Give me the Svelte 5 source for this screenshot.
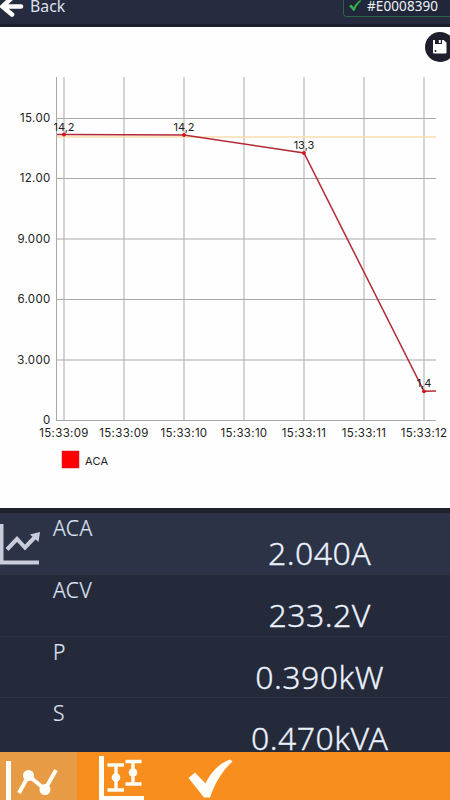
<script>
    const serial = "#E0008390";

    const yTicks = [
        { y: 118.5, label: "15.00" },
        { y: 178.5, label: "12.00" },
        { y: 239, label: "9.000" },
        { y: 299.5, label: "6.000" },
        { y: 360, label: "3.000" },
        { y: 420.5, label: "0" },
    ];
    const xTicks = [
        { x: 64, label: "15:33:09" },
        { x: 124, label: "15:33:09" },
        { x: 184, label: "15:33:10" },
        { x: 244, label: "15:33:10" },
        { x: 304, label: "15:33:11" },
        { x: 364, label: "15:33:11" },
        { x: 424, label: "15:33:12" },
    ];
    const points = [
        { x: 64, y: 134.5, label: "14,2" },
        { x: 184, y: 135, label: "14,2" },
        { x: 304, y: 153, label: "13,3" },
        { x: 424, y: 391.3, label: "1,4" },
    ];
    const line =
        "57,134.5 " + points.map((p) => `${p.x},${p.y}`).join(" ") + " 436,391";

    let rows = [
        { name: "ACA", value: "2.040A" },
        { name: "ACV", value: "233.2V" },
        { name: "P", value: "0.390kW" },
        { name: "S", value: "0.470kVA" },
    ];
    let selected = $state("ACA");
    let tab = $state("line");
</script>

<div class="app">
    <header>
        <button class="back">
            <svg width="24" height="24" viewBox="0 0 24 24">
                <path d="M3 6.5H21M11 -1.5L2.5 6.5L12 14.5" />
            </svg>
            <span>Back</span>
        </button>
        <div class="serial">
            <svg width="13" height="12" viewBox="0 0 13 12">
                <path d="M0 6.4L2.2 4.4L4.7 7.2C6.5 4.3 8.6 1.8 11.2 0L12.2 .8C9.2 3.7 7 7 5.4 11H4.3C3.2 9.1 1.8 7.6 0 6.4Z" />
            </svg>
            <span>{serial}</span>
        </div>
    </header>

    <section class="chart">
        <svg width="450" height="480" viewBox="0 28 450 480">
            <g class="grid">
                {#each yTicks as t}
                    <line x1="56" x2="436" y1={t.y} y2={t.y} />
                {/each}
                {#each xTicks as t}
                    <line x1={t.x} x2={t.x} y1="77" y2="420" />
                {/each}
                <line x1="56.5" x2="56.5" y1="77" y2="421" />
            </g>
            <line class="limit" x1="57" x2="436" y1="137" y2="137" />
            <g class="axis">
                {#each yTicks as t}
                    <text x="50.5" y={t.y + 3.5} text-anchor="end">{t.label}</text>
                {/each}
                {#each xTicks as t}
                    <text x={t.x} y="437" text-anchor="middle">{t.label}</text>
                {/each}
            </g>
            <polyline class="series" points={line} />
            {#each points as p}
                <circle class="dot" cx={p.x} cy={p.y} r="1.9" />
                <text class="point" x={p.x} y={p.y - 4} text-anchor="middle">{p.label}</text>
            {/each}
            <rect class="key" x="62" y="451" width="17" height="17" />
            <text class="legend" x="85" y="464.5">ACA</text>
        </svg>
        <button class="save" aria-label="Save">
            <svg width="30" height="30" viewBox="0 0 30 30">
                <path d="M8.5 8H10V12H17V8H18.5L21.5 10.5V20.5Q21.5 21.5 20.5 21.5H9Q8 21.5 8 20.5V8.5ZM13.8 8H15.8V11H13.8Z" />
                <circle cx="10.5" cy="19" r="1" />
            </svg>
        </button>
    </section>

    <section class="values">
        {#each rows as row}
            <div class="row" class:selected={selected === row.name}>
                <div class="mark">
                    {#if selected === row.name}
                        <svg width="42" height="42" viewBox="0 0 42 42">
                            <path class="axes" d="M1.5 1V39.5H39" />
                            <path class="trend" d="M7 26.5L17 16L25 24.5L36 13" />
                            <path class="head" d="M30 11.5L40 9L38.5 19Z" />
                        </svg>
                    {/if}
                </div>
                <span class="name">{row.name}</span>
                <span class="value">{row.value}</span>
            </div>
        {/each}
    </section>

    <nav>
        <button class:active={tab === "line"} aria-label="Line chart" onclick={() => (tab = "line")}>
            <svg width="77" height="48" viewBox="0 0 77 48">
                <path class="thick" d="M8.5 9V48" />
                <path d="M19 41L28.5 23.5L45 37.5L56 18" />
                <circle cx="28.5" cy="23.5" r="5.5" />
                <circle cx="45" cy="37.5" r="5.5" />
            </svg>
        </button>
        <button class:active={tab === "range"} aria-label="Range chart" onclick={() => (tab = "range")}>
            <svg width="77" height="48" viewBox="0 0 77 48">
                <path class="thick" d="M24.5 4V46.5H67" />
                <path d="M30.5 13H47M39 13V38M30.5 38H47M48.5 9.5H64.5M56 9.5V32M48.5 32H64.5" class="thin" />
                <circle cx="39" cy="25.5" r="4.3" />
                <circle cx="56" cy="20.5" r="4.3" />
            </svg>
        </button>
        <button class:active={tab === "check"} aria-label="Confirm" onclick={() => (tab = "check")}>
            <svg width="96" height="48" viewBox="0 0 96 48">
                <path class="tick" d="M34.5 26L41 20.5L51.5 31.5C57 20 65 11.5 76 7.5L78.5 9.5C68.5 18.5 61 31 56 45.5H50Z" />
            </svg>
        </button>
    </nav>
</div>

<style>
    :global(body) {
        margin: 0;
    }
    .app {
        display: flex;
        flex-direction: column;
        width: 450px;
        height: 800px;
        overflow: hidden;
        background: #252a3b;
        font-family: "Noto Sans", sans-serif;
    }
    button {
        border: 0;
        padding: 0;
        background: none;
        font: inherit;
        color: inherit;
    }
    svg {
        display: block;
    }
    header {
        display: flex;
        justify-content: space-between;
        align-items: flex-start;
        height: 27px;
        box-sizing: border-box;
        flex: none;
        background: #262b3f;
        border-bottom: 3px solid #1b1e2b;
        color: #eef0f6;
    }
    .back {
        display: flex;
        gap: 6px;
        height: 24px;
    }
    .back span {
        font-size: 15.8px;
        line-height: 13px;
        color: #dde1ed;
    }
    .back path {
        fill: none;
        stroke: #fff;
        stroke-width: 4.6;
        stroke-linecap: round;
    }
    .serial {
        display: flex;
        gap: 5px;
        width: 107px;
        height: 17px;
        box-sizing: border-box;
        padding-left: 5px;
        border: solid #2a6348;
        border-width: 0 0 1px 1px;
        border-radius: 0 0 0 4px;
        background: #20273a;
        font-size: 13.5px;
        line-height: 13px;
    }
    .serial span {
        letter-spacing: 0.1px;
    }
    .serial path {
        fill: #35b04b;
    }
    .chart {
        position: relative;
        height: 480px;
        flex: none;
        padding-top: 1px;
        background: #fefefe;
        border-bottom: 5px solid #1e202a;
    }
    .grid line {
        stroke: #a9a9ab;
        stroke-width: 1;
    }
    .limit {
        stroke: #fbdcaf;
        stroke-width: 1.3;
    }
    .axis,
    .point,
    .legend {
        font-family: Inter, sans-serif;
        fill: #222;
    }
    .axis {
        font-size: 11.5px;
        letter-spacing: 0.3px;
    }
    .point {
        font-size: 11px;
    }
    .legend {
        font-size: 11px;
        letter-spacing: 0.2px;
    }
    .series {
        fill: none;
        stroke: #b22a36;
        stroke-width: 1.5;
    }
    .dot {
        fill: #d9101c;
    }
    .key {
        fill: #f00;
        stroke: #c22;
        stroke-width: 0.5;
    }
    .save {
        position: absolute;
        right: -5px;
        top: 5px;
        width: 30px;
        height: 30px;
        border-radius: 50%;
        background: #1e1e2c;
    }
    .save path {
        fill: #fff;
    }
    .save circle {
        fill: #1e1e2c;
    }
    .values {
        flex: 1;
        min-height: 0;
        overflow: hidden;
        font-weight: 300;
    }
    .row {
        display: flex;
        height: 61.8px;
        box-sizing: border-box;
        border-bottom: 1px solid #2d3244;
    }
    .row.selected {
        background: #2d3347;
    }
    .mark {
        width: 53px;
        padding-top: 10px;
        flex: none;
    }
    .axes,
    .trend {
        fill: none;
        stroke: #c9cddb;
        stroke-width: 4;
    }
    .head {
        fill: #c9cddb;
    }
    .name {
        width: 137px;
        font-size: 21px;
        line-height: 31px;
        letter-spacing: 0.5px;
        color: #dde2f2;
        -webkit-text-stroke: 0.2px #dde2f2;
    }
    .value {
        width: 262px;
        padding-top: 18px;
        font-size: 32px;
        line-height: 44px;
        letter-spacing: 0.5px;
        text-align: center;
        color: #eaf1fd;
        -webkit-text-stroke: 0.3px #eaf1fd;
    }
    nav {
        display: flex;
        flex: none;
        height: 48px;
        background: #f88e1d;
    }
    nav .active {
        background: #e89b45;
    }
    nav path {
        fill: none;
        stroke: #fffdf8;
        stroke-width: 4;
    }
    nav .thick {
        stroke-width: 5;
    }
    nav .thin {
        stroke-width: 3.4;
    }
    nav .tick {
        fill: #fffdf8;
        stroke: none;
    }
    nav circle {
        fill: #fffdf8;
    }
</style>
